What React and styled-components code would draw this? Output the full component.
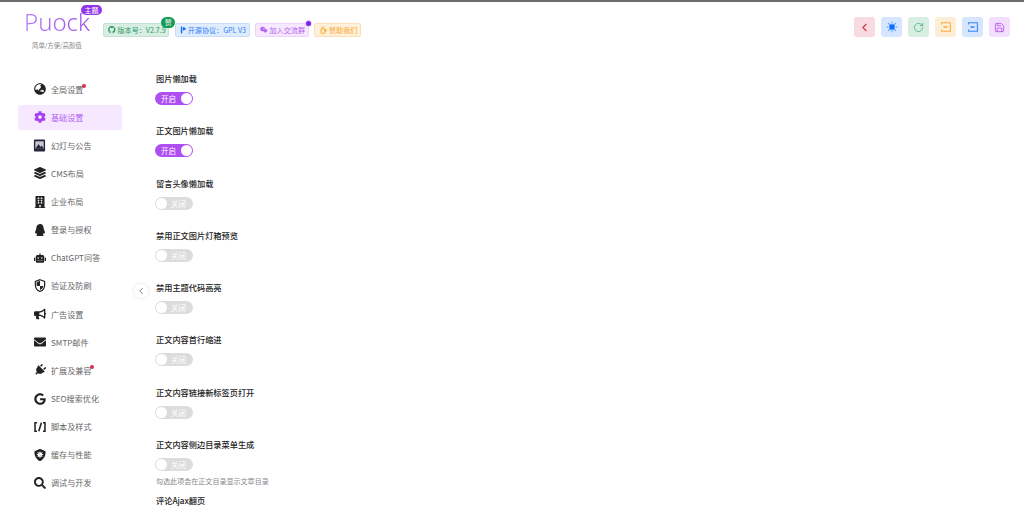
import styled, { createGlobalStyle } from "styled-components";
import {
  FaGlobeAsia,
  FaCog,
  FaLayerGroup,
  FaBuilding,
  FaQq,
  FaRobot,
  FaBullhorn,
  FaEnvelope,
  FaPlug,
  FaGoogle,
  FaShieldVirus,
  FaSearch,
  FaGithub,
  FaWeixin,
} from "react-icons/fa";
import { ChevronLeft, RotateCw, Save } from "lucide-react";

const GlobalStyle = createGlobalStyle`
  html, body {
    margin: 0;
    padding: 0;
    background: #fff;
    font-family: "Noto Sans CJK SC", "Liberation Sans", sans-serif;
    overflow: hidden;
  }
`;

const BracketIcon = () => (
  <svg width="12" height="12" viewBox="0 0 14 14" fill="none" stroke="#222" strokeWidth="1.8">
    <path d="M3.5 2H1.2v10h2.3M10.5 2h2.3v10h-2.3M8.6 2 5.6 12" />
  </svg>
);

const SlideIcon = () => (
  <svg width="13" height="13" viewBox="0 0 14 14">
    <rect x="1" y="0.5" width="12" height="13" rx="1" fill="#26263a" />
    <rect x="2.5" y="2.5" width="9" height="8" fill="#c9c9d2" />
    <path d="M2.5 10.5 6 5.5l2.2 3 1.3-1.5 2 3.5z" fill="#26263a" />
  </svg>
);

const ShieldIcon = () => (
  <svg width="12" height="13" viewBox="0 0 12 14">
    <path d="M6 .8 11 2.6v4c0 3.3-2.2 5.6-5 6.8-2.8-1.2-5-3.5-5-6.8v-4z" fill="#fff" stroke="#222" strokeWidth="1.3" />
    <path d="M6 2v5.5H2.4V3.4zM6 7.5h3.6C9.2 9.6 7.9 11 6 11.9z" fill="#222" />
  </svg>
);

const SunIcon = () => (
  <svg width="12" height="12" viewBox="0 0 14 14" fill="currentColor" stroke="currentColor">
    <rect x="4.5" y="4.5" width="5" height="5" strokeWidth="1" />
    <path
      d="M7 .8v2M7 11.2v2M.8 7h2M11.2 7h2M2.6 2.6 4 4M10 10l1.4 1.4M2.6 11.4 4 10M10 4l1.4-1.4"
      strokeWidth="1.2"
      opacity="0.7"
    />
  </svg>
);

const PanelIcon = () => (
  <svg width="10" height="10" viewBox="0 0 10 10" fill="none" stroke="currentColor" strokeWidth="1.1" opacity="0.8">
    <path d="M.6 2.6V.8h8.8v8.4H.6V7.4" />
    <path d="M2.5 5h4" strokeWidth="1.6" />
  </svg>
);

const CupIcon = () => (
  <svg width="8" height="8" viewBox="0 0 12 12" fill="none" stroke="#fd9c14" strokeWidth="1.3">
    <path d="M3 4.5h6v5.5a1 1 0 0 1-1 1H4a1 1 0 0 1-1-1zM9 5.5h1.5v2.5H9M4.5 1v2M7 1v2" />
  </svg>
);

const LicenseIcon = () => (
  <svg width="6" height="8" viewBox="0 0 7 8" fill="#0d6efd">
    <rect x="1" y="0" width="1.6" height="8" />
    <path d="M3.4 0.4 6.6 1.8v1.6L3.4 4.8z" />
  </svg>
);

const menu = [
  { name: "全局设置", icon: <FaGlobeAsia />, dot: true },
  { name: "基础设置", icon: <FaCog />, active: true },
  { name: "幻灯与公告", icon: <SlideIcon /> },
  { name: "CMS布局", icon: <FaLayerGroup /> },
  { name: "企业布局", icon: <FaBuilding /> },
  { name: "登录与授权", icon: <FaQq /> },
  { name: "ChatGPT问答", icon: <FaRobot /> },
  { name: "验证及防刷", icon: <ShieldIcon /> },
  { name: "广告设置", icon: <FaBullhorn /> },
  { name: "SMTP邮件", icon: <FaEnvelope /> },
  { name: "扩展及兼容", icon: <FaPlug style={{ transform: "rotate(45deg)" }} />, dot: true },
  { name: "SEO搜索优化", icon: <FaGoogle /> },
  { name: "脚本及样式", icon: <BracketIcon /> },
  { name: "缓存与性能", icon: <FaShieldVirus /> },
  { name: "调试与开发", icon: <FaSearch /> },
];

const settings = [
  { label: "图片懒加载", on: true },
  { label: "正文图片懒加载", on: true },
  { label: "留言头像懒加载" },
  { label: "禁用正文图片灯箱预览" },
  { label: "禁用主题代码高亮" },
  { label: "正文内容首行缩进" },
  { label: "正文内容链接新标签页打开" },
  { label: "正文内容侧边目录菜单生成", help: "勾选此项会在正文目录显示文章目录" },
];

const headerButtons = [
  { bg: "#f8dbe0", color: "#dc3545", icon: <ChevronLeft size={13} strokeWidth={2} /> },
  { bg: "#d6e6ff", color: "#0d6efd", icon: <SunIcon /> },
  { bg: "#d8eee3", color: "#3fa877", icon: <RotateCw size={11} strokeWidth={1.6} /> },
  { bg: "#fdeed8", color: "#fd9c14", icon: <PanelIcon /> },
  { bg: "#d6e6ff", color: "#0d6efd", icon: <PanelIcon /> },
  { bg: "#f3defe", color: "#a93df0", icon: <Save size={11} strokeWidth={1.6} /> },
];

export default function App() {
  return (
    <Page>
      <GlobalStyle />
      <Header>
        <Logo>
          <LogoName>
            <LogoText>Puock</LogoText>
            <ThemeBadge>主题</ThemeBadge>
          </LogoName>
          <LogoSub>简单/方便/高颜值</LogoSub>
        </Logo>
        <Tags>
          <Tag $bg="#d8eee3" $border="#c3e3d3" $color="#2f9a68">
            <FaGithub />
            版本号：V2.7.9
            <NewBadge>赞</NewBadge>
          </Tag>
          <Tag $bg="#dfecfe" $border="#c8dffb" $color="#2f83f5">
            <LicenseIcon />
            开源协议：GPL V3
          </Tag>
          <Tag $bg="#f6e8fe" $border="#ecd5fb" $color="#b45ff2">
            <FaWeixin />
            加入交流群
            <PurpleDot />
          </Tag>
          <Tag $bg="#fff0d9" $border="#ffe0b3" $color="#f9a533">
            <CupIcon />
            赞助我们
          </Tag>
        </Tags>
        <HeaderActions>
          {headerButtons.map((b, i) => (
            <ActionButton key={i} $bg={b.bg} $color={b.color}>
              {b.icon}
            </ActionButton>
          ))}
        </HeaderActions>
      </Header>
      <Body>
        <Sidebar>
          {menu.map((m) => (
            <MenuItem key={m.name} $active={m.active}>
              <MenuIcon $active={m.active}>{m.icon}</MenuIcon>
              <MenuText>
                {m.name}
                {m.dot && <RedDot />}
              </MenuText>
            </MenuItem>
          ))}
          <Collapse>
            <ChevronLeft size={10} strokeWidth={1.6} />
          </Collapse>
        </Sidebar>
        <Content>
          {settings.map((s) => (
            <Field key={s.label}>
              <FieldLabel>{s.label}</FieldLabel>
              <Toggle $on={s.on}>
                <Knob $on={s.on} />
                <ToggleText $on={s.on}>{s.on ? "开启" : "关闭"}</ToggleText>
              </Toggle>
              {s.help && <Help>{s.help}</Help>}
            </Field>
          ))}
          <FieldLabel>评论Ajax翻页</FieldLabel>
        </Content>
      </Body>
    </Page>
  );
}

const Page = styled.div`
  width: 1024px;
  height: 508px;
  overflow: hidden;
  background: #fff;
  border-top: 2px solid #6c6c6c;
  box-sizing: border-box;
`;

const Header = styled.header`
  display: flex;
  align-items: flex-start;
  height: 74.5px;
  box-sizing: border-box;
  padding-left: 24px;
`;

const Logo = styled.div`
  width: 79px;
  flex-shrink: 0;
  display: flex;
  flex-direction: column;
`;

const LogoName = styled.div`
  position: relative;
  width: fit-content;
  margin-top: 6px;
`;

const LogoText = styled.span`
  display: block;
  font-family: "Noto Sans", sans-serif;
  font-weight: 300;
  font-size: 24px;
  line-height: 28px;
  background: linear-gradient(90deg, #b57bf5, #9a4dee);
  background-clip: text;
  -webkit-background-clip: text;
  -webkit-text-fill-color: transparent;
`;

const ThemeBadge = styled.span`
  position: absolute;
  left: 57px;
  top: -3px;
  width: 21px;
  height: 10px;
  border-radius: 5px;
  background: #9333ea;
  color: #fff;
  font-size: 7px;
  line-height: 10px;
  text-align: center;
`;

const LogoSub = styled.div`
  margin: 5px 0 0 8px;
  font-size: 6.4px;
  line-height: 10px;
  color: #8a8a8a;
  white-space: nowrap;
`;

const Tags = styled.div`
  display: flex;
  gap: 5.5px;
  margin-top: 21px;
`;

const Tag = styled.div`
  position: relative;
  display: flex;
  align-items: center;
  gap: 2px;
  height: 12px;
  padding: 0 2.5px 0 4px;
  border: 1px solid ${(p) => p.$border};
  border-radius: 2px;
  background: ${(p) => p.$bg};
  color: ${(p) => p.$color};
  font-size: 7.1px;
  line-height: 12px;
  white-space: nowrap;
  svg {
    font-size: 7.5px;
    flex-shrink: 0;
  }
`;

const NewBadge = styled.span`
  position: absolute;
  right: -7px;
  top: -7px;
  width: 14px;
  height: 11px;
  border-radius: 6px;
  background: #159a55;
  color: #fff;
  font-size: 7px;
  line-height: 11px;
  text-align: center;
`;

const PurpleDot = styled.span`
  position: absolute;
  right: -3px;
  top: -3px;
  width: 5px;
  height: 5px;
  border-radius: 50%;
  background: #7c22ea;
  box-shadow: 0 0 0 1px #ecd5fb;
`;

const HeaderActions = styled.div`
  display: flex;
  gap: 6px;
  margin: 15px 0 0 auto;
  padding-right: 14px;
`;

const ActionButton = styled.div`
  width: 21px;
  height: 20px;
  border-radius: 3px;
  display: flex;
  align-items: center;
  justify-content: center;
  background: ${(p) => p.$bg};
  color: ${(p) => p.$color};
`;

const Body = styled.div`
  display: flex;
`;

const Sidebar = styled.nav`
  position: relative;
  width: 104px;
  margin-left: 18px;
  display: flex;
  flex-direction: column;
  flex-shrink: 0;
`;

const MenuItem = styled.div`
  display: flex;
  align-items: center;
  gap: 5px;
  height: 25px;
  margin-bottom: 3.15px;
  padding-left: 15px;
  border-radius: 3px;
  background: ${(p) => (p.$active ? "#f6e8fe" : "transparent")};
  color: ${(p) => (p.$active ? "#b45ff2" : "#666")};
`;

const MenuIcon = styled.span`
  width: 13px;
  height: 13px;
  display: flex;
  align-items: center;
  justify-content: center;
  font-size: 12px;
  color: ${(p) => (p.$active ? "#a93df0" : "#222")};
`;

const MenuText = styled.span`
  position: relative;
  font-size: 8.1px;
  line-height: 13px;
  white-space: nowrap;
`;

const RedDot = styled.span`
  position: absolute;
  right: -3px;
  top: 1.5px;
  width: 4px;
  height: 4px;
  border-radius: 50%;
  background: #dc2f4f;
`;

const Collapse = styled.div`
  position: absolute;
  left: 115.5px;
  top: 207px;
  width: 14px;
  height: 14px;
  border-radius: 50%;
  background: #fff;
  box-shadow: 0 0 4px rgba(0, 0, 0, 0.12);
  display: flex;
  align-items: center;
  justify-content: center;
  color: #333;
`;

const Content = styled.main`
  margin: -4.5px 0 0 33px;
  display: flex;
  flex-direction: column;
`;

const Field = styled.div`
  display: flex;
  flex-direction: column;
  align-items: flex-start;
  height: 52.3px;
  &:nth-last-of-type(2) {
    height: auto;
    margin-bottom: 7px;
  }
`;

const FieldLabel = styled.div`
  height: 12px;
  margin: 0 0 8px 1px;
  font-size: 8.2px;
  line-height: 12px;
  font-weight: 500;
  color: #222;
  white-space: nowrap;
`;

const Toggle = styled.div`
  position: relative;
  width: 38px;
  height: 13px;
  border-radius: 7px;
  background: ${(p) => (p.$on ? "#af4ef2" : "#dcdcdc")};
`;

const Knob = styled.span`
  position: absolute;
  top: 1px;
  ${(p) => (p.$on ? "right: 1px;" : "left: 1px;")}
  width: 11px;
  height: 11px;
  border-radius: 50%;
  background: #fff;
`;

const ToggleText = styled.span`
  position: absolute;
  top: 0;
  left: ${(p) => (p.$on ? "6px" : "16px")};
  font-size: 7.5px;
  line-height: 13px;
  color: #fff;
`;

const Help = styled.div`
  margin: 5px 0 0 1px;
  font-size: 7.05px;
  line-height: 11px;
  color: #888;
  white-space: nowrap;
`;
